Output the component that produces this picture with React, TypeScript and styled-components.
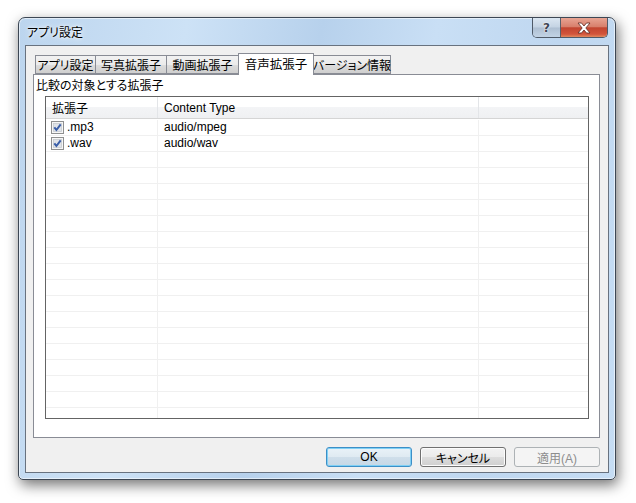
import styled, { createGlobalStyle } from 'styled-components'

const GlobalStyle = createGlobalStyle`
  html, body {
    margin: 0;
    padding: 0;
    background: #ffffff;
  }
  body {
    font-family: 'Liberation Sans', 'Noto Sans CJK JP', sans-serif;
    font-size: 12px;
    color: #000;
    font-feature-settings: 'palt';
  }
`

const Page = styled.div`
  width: 636px;
  height: 503px;
  padding: 17px 0 0 18px;
  box-sizing: border-box;
  overflow: hidden;
`

const Window = styled.div`
  width: 598px;
  height: 463px;
  box-sizing: border-box;
  border: 1px solid #3d4754;
  border-radius: 7px 7px 5px 5px;
  padding: 0 6px 6px;
  display: flex;
  flex-direction: column;
  background: linear-gradient(
    100deg,
    #bcd5ee 0%,
    #cde2f6 25%,
    #b7d1ec 45%,
    #c9dff5 62%,
    #bfd7f0 80%,
    #c6ddf4 100%
  );
  box-shadow: 2px 5px 14px rgba(0, 0, 0, 0.55), inset 0 0 0 1px rgba(255, 255, 255, 0.55);
`

const TitleBar = styled.div`
  height: 27px;
  display: flex;
  align-items: flex-start;
  flex-shrink: 0;
`

const TitleText = styled.div`
  margin: 6px 0 0 2px;
  font-family: 'Noto Sans CJK JP', sans-serif;
  font-size: 12px;
  line-height: 16px;
  color: #000;
  text-shadow: 0 0 6px rgba(255, 255, 255, 0.9), 0 0 3px rgba(255, 255, 255, 0.9);
`

const CaptionButtons = styled.div`
  margin-left: auto;
  margin-right: 1px;
  display: flex;
  height: 19px;
  border: 1px solid #4f5a68;
  border-top: none;
  border-radius: 0 0 5px 5px;
  overflow: hidden;
`

const HelpButton = styled.div`
  width: 27px;
  display: flex;
  align-items: center;
  justify-content: center;
  background: linear-gradient(#dbe6f1 0%, #c4d3e3 48%, #aebfd2 52%, #c2d3e5 100%);
  border-right: 1px solid #59606a;
  font-family: 'DejaVu Sans', sans-serif;
  font-weight: bold;
  font-size: 12px;
  color: #3e4654;
  text-shadow: 0 0 2px #fff, 0 0 1px #fff;
`

const CloseButton = styled.div`
  width: 46px;
  display: flex;
  align-items: center;
  justify-content: center;
  background: linear-gradient(#e8a493 0%, #d8806c 45%, #c24530 52%, #d2553c 85%, #e28a5e 100%);
`

const Client = styled.div`
  flex: 1;
  display: flex;
  flex-direction: column;
  background: #f0f0f0;
  border: 1px solid #68727f;
  padding: 7px 8px 0 7px;
`

const TabRow = styled.div`
  display: flex;
  align-items: flex-end;
  height: 21px;
  padding-left: 2px;
  position: relative;
  z-index: 1;
`

const Tab = styled.div<{ $width: number; $active?: boolean }>`
  width: ${({ $width }) => $width}px;
  box-sizing: border-box;
  height: ${({ $active }) => ($active ? 22 : 19)}px;
  margin-left: -1px;
  margin-bottom: ${({ $active }) => ($active ? -1 : 0)}px;
  border: 1px solid #898c95;
  border-bottom: ${({ $active }) => ($active ? 'none' : '1px solid #898c95')};
  background: ${({ $active }) => ($active ? '#ffffff' : 'linear-gradient(#f2f2f2 0%, #ebebeb 50%, #dddddd 51%, #cfcfcf 100%)')};
  display: flex;
  align-items: center;
  justify-content: center;
  padding-bottom: ${({ $active }) => ($active ? 2 : 0)}px;
  font-family: 'Noto Sans CJK JP', sans-serif;
  font-size: ${({ $active }) => ($active ? 12.5 : 12)}px;
  line-height: 16px;
  white-space: nowrap;
  z-index: ${({ $active }) => ($active ? 2 : 0)};
  &:first-child {
    margin-left: 0;
  }
`

const Panel = styled.div`
  height: 364px;
  box-sizing: border-box;
  background: #ffffff;
  border: 1px solid #898c95;
  padding: 0 0 0 2px;
  flex-shrink: 0;
`

const PanelLabel = styled.div`
  margin-top: 1px;
  height: 20px;
  line-height: 18px;
  font-family: 'Noto Sans CJK JP', sans-serif;
  font-size: 12px;
`

const List = styled.div`
  margin-left: 9px;
  width: 544px;
  height: 323px;
  box-sizing: border-box;
  border: 1px solid #646464;
  overflow: hidden;
`

const Columns = styled.div`
  display: grid;
  grid-template-columns: 112px 321px 1fr;
`

const HeaderRow = styled(Columns)`
  height: 22px;
  box-sizing: border-box;
  border-bottom: 1px solid #d5d5d5;
  background: linear-gradient(#ffffff 0%, #ffffff 50%, #f3f4f6 50%, #eff0f2 100%);
`

const HeaderCell = styled.div`
  box-sizing: border-box;
  border-right: 1px solid #e3e5e8;
  padding-left: 6px;
  display: flex;
  align-items: center;
  font-size: 12px;
  &:last-child {
    border-right: none;
  }
`

const Body = styled.div`
  padding-top: 1px;
`

const Row = styled(Columns)`
  height: 16px;
  box-sizing: border-box;
  border-bottom: 1px solid #f0f0f0;
`

const Cell = styled.div<{ $first?: boolean }>`
  box-sizing: border-box;
  border-right: 1px solid #f0f0f0;
  padding-left: ${({ $first }) => ($first ? 5 : 6)}px;
  display: flex;
  align-items: center;
  gap: 3px;
  font-size: 12px;
  line-height: 15px;
  white-space: nowrap;
  &:last-child {
    border-right: none;
  }
`

const ButtonRow = styled.div`
  display: flex;
  justify-content: flex-end;
  gap: 8px;
  margin-top: 9px;
`

const Button = styled.div<{ $variant?: 'default' | 'normal' | 'disabled' }>`
  width: 86px;
  height: 20px;
  box-sizing: border-box;
  border-radius: 3px;
  display: flex;
  align-items: center;
  justify-content: center;
  font-family: 'Liberation Sans', 'Noto Sans CJK JP', sans-serif;
  font-size: 12px;
  border: 1px solid
    ${({ $variant }) => ($variant === 'default' ? '#3c8fc7' : $variant === 'disabled' ? '#adb2b5' : '#707070')};
  color: ${({ $variant }) => ($variant === 'disabled' ? '#8d8d8d' : '#000')};
  background: ${({ $variant }) =>
    $variant === 'default'
      ? 'linear-gradient(#e9f2f8 0%, #dfeaf2 50%, #cfdeea 51%, #c6d8e6 100%)'
      : $variant === 'disabled'
      ? '#f4f4f4'
      : 'linear-gradient(#f2f2f2 0%, #ebebeb 50%, #dddddd 51%, #cfcfcf 100%)'};
  box-shadow: ${({ $variant }) =>
    $variant === 'default' ? 'inset 0 0 0 1px #7fd0f5' : $variant === 'disabled' ? 'none' : 'inset 0 0 0 1px #fcfcfc'};
`

function CheckBox() {
  return (
    <svg width="13" height="13" viewBox="0 0 13 13">
      <rect x="0.5" y="0.5" width="12" height="12" fill="#f6f6f6" stroke="#8e8f8f" />
      <rect x="2.5" y="2.5" width="8" height="8" fill="#e0e3e8" stroke="#c8cbd0" strokeWidth="0.8" />
      <path d="M3.3 6.4 L5.4 9 L9.7 3.3" fill="none" stroke="#3a5ea8" strokeWidth="2" />
    </svg>
  )
}

function CloseGlyph() {
  return (
    <svg width="16" height="12" viewBox="0 0 16 12">
      <path
        d="M2 1 H5.5 L8 4 L10.5 1 H14 L9.8 6 L14 11 H10.5 L8 8 L5.5 11 H2 L6.2 6 Z"
        fill="#ffffff"
        stroke="#5a2a22"
        strokeWidth="0.8"
        strokeLinejoin="round"
      />
    </svg>
  )
}

const tabs = [
  { label: 'アプリ設定', width: 61 },
  { label: '写真拡張子', width: 72 },
  { label: '動画拡張子', width: 73 },
  { label: '音声拡張子', width: 76, active: true },
  { label: 'バージョン情報', width: 78 },
]

const items = [
  { ext: '.mp3', type: 'audio/mpeg' },
  { ext: '.wav', type: 'audio/wav' },
]

export default function App() {
  const emptyRows = Array.from({ length: 19 - items.length })

  return (
    <Page>
      <GlobalStyle />
      <Window>
        <TitleBar>
          <TitleText>アプリ設定</TitleText>
          <CaptionButtons>
            <HelpButton>?</HelpButton>
            <CloseButton>
              <CloseGlyph />
            </CloseButton>
          </CaptionButtons>
        </TitleBar>
        <Client>
          <TabRow>
            {tabs.map((tab) => (
              <Tab key={tab.label} $width={tab.width} $active={tab.active}>
                {tab.label}
              </Tab>
            ))}
          </TabRow>
          <Panel>
            <PanelLabel>比較の対象とする拡張子</PanelLabel>
            <List>
              <HeaderRow>
                <HeaderCell>拡張子</HeaderCell>
                <HeaderCell>Content Type</HeaderCell>
                <HeaderCell />
              </HeaderRow>
              <Body>
                {items.map((item) => (
                  <Row key={item.ext}>
                    <Cell $first>
                      <CheckBox />
                      {item.ext}
                    </Cell>
                    <Cell>{item.type}</Cell>
                    <Cell />
                  </Row>
                ))}
                {emptyRows.map((_, i) => (
                  <Row key={i}>
                    <Cell $first />
                    <Cell />
                    <Cell />
                  </Row>
                ))}
              </Body>
            </List>
          </Panel>
          <ButtonRow>
            <Button $variant="default">OK</Button>
            <Button $variant="normal">キャンセル</Button>
            <Button $variant="disabled">適用(A)</Button>
          </ButtonRow>
        </Client>
      </Window>
    </Page>
  )
}
